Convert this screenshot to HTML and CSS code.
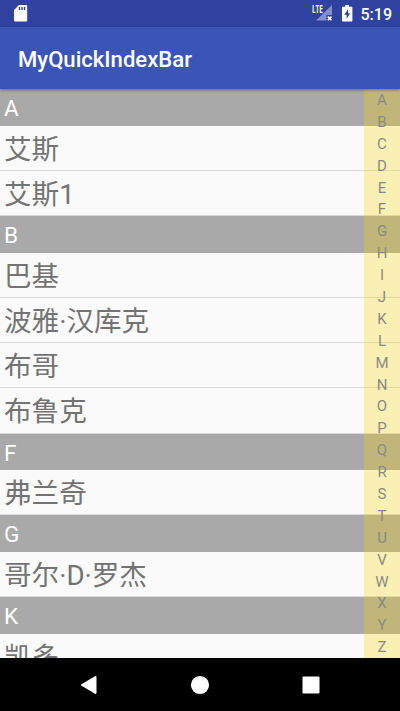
FILE: index.html
```html
<!DOCTYPE html>
<html lang="zh-CN">
<head>
<meta charset="utf-8">
<title>MyQuickIndexBar</title>
<link rel="stylesheet" href="styles.css">
</head>
<body>
<div class="screen">
  <header class="status">
    <svg class="sd" width="14" height="17" viewBox="0 0 14 17"><path fill="#fff" fill-rule="evenodd" d="M5 0H12Q13.2 0 13.2 1.3V15.2Q13.2 16.5 12 16.5H1.2Q0 16.5 0 15.2V5ZM4.8 2V5H6.2V2ZM7.3 2V5H8.7V2ZM9.8 2V5H11.2V2Z"/></svg>
    <div class="signal">
      <span class="lte">LTE</span>
      <svg width="17" height="17" viewBox="0 0 17 17"><path fill="#8190cb" d="M16 0V10H10.5V15.5H0Z"/><path stroke="#fff" stroke-width="1.5" d="M11.8 11.6 15.5 15.3M15.5 11.6 11.8 15.3"/></svg>
    </div>
    <svg class="battery" width="11" height="17" viewBox="0 0 11 17"><path fill="#fff" fill-rule="evenodd" d="M3.3 0H7.1V1.7H9.5Q10.4 1.7 10.4 2.6V15.6Q10.4 16.5 9.5 16.5H.9Q0 16.5 0 15.6V2.6Q0 1.7 .9 1.7H3.3ZM6 4.2 2.3 9.8H4.6V14L8.1 8.3H6Z"/></svg>
    <span class="clock">5:19</span>
  </header>
  <div class="appbar"><h1>MyQuickIndexBar</h1></div>
  <main class="content">
    <div class="list">
      <div class="letter">A</div>
      <div class="name">艾斯</div>
      <div class="name">艾斯1</div>
      <div class="letter">B</div>
      <div class="name">巴基</div>
      <div class="name">波雅·汉库克</div>
      <div class="name">布哥</div>
      <div class="name">布鲁克</div>
      <div class="letter">F</div>
      <div class="name">弗兰奇</div>
      <div class="letter">G</div>
      <div class="name">哥尔·D·罗杰</div>
      <div class="letter">K</div>
      <div class="name">凯多</div>
    </div>
    <nav class="index">
      <span>A</span><span>B</span><span>C</span><span>D</span><span>E</span><span>F</span><span>G</span><span>H</span><span>I</span><span>J</span><span>K</span><span>L</span><span>M</span><span>N</span><span>O</span><span>P</span><span>Q</span><span>R</span><span>S</span><span>T</span><span>U</span><span>V</span><span>W</span><span>X</span><span>Y</span><span>Z</span>
    </nav>
  </main>
  <footer class="navbar">
    <svg width="18" height="20" viewBox="0 0 18 20"><path fill="#fff" stroke="#fff" stroke-width="2" stroke-linejoin="round" d="M2 10 15.5 2V18Z"/></svg>
    <svg width="20" height="20" viewBox="0 0 20 20"><circle cx="10" cy="10" r="9.1" fill="#fff"/></svg>
    <svg width="18" height="18" viewBox="0 0 18 18"><rect x=".5" y=".5" width="17" height="17" rx="1" fill="#fff"/></svg>
  </footer>
</div>
</body>
</html>
```
FILE: styles.css
```css
* { box-sizing: border-box; }
body {
  margin: 0;
  font-family: Roboto, "Noto Sans CJK SC", sans-serif;
}
.screen {
  width: 400px;
  height: 711px;
  display: flex;
  flex-direction: column;
  overflow: hidden;
}
.status {
  height: 27px;
  flex: none;
  display: flex;
  align-items: center;
  padding: 0 8px 0 14px;
  background: #3042a0;
  color: #fff;
}
.signal {
  display: flex;
  align-items: flex-start;
  margin-left: auto;
  margin-right: 9px;
}
.lte {
  width: 4px;
  font: 700 10px/9px "Open Sans", sans-serif;
  transform: scaleX(.64);
  transform-origin: left;
}
.battery { margin-right: 8px; }
.clock {
  font-size: 16px;
  font-weight: 500;
  line-height: 27px;
  padding-top: 1px;
}
.appbar {
  height: 62px;
  flex: none;
  display: flex;
  align-items: center;
  padding: 1px 18px 0;
  background: #3b54b8;
  box-shadow: 0 1px 3px rgba(0, 0, 0, .4);
  position: relative;
  z-index: 1;
}
.appbar h1 {
  margin: 0;
  color: #fff;
  font-size: 22.1px;
  font-weight: 500;
}
.content {
  height: 569px;
  flex: none;
  display: grid;
  grid-template-columns: 364px 36px;
  grid-template-rows: 569px;
  background: #fafafa;
  overflow: hidden;
}
.list {
  grid-area: 1 / 1 / 2 / 3;
  overflow: hidden;
}
.letter {
  height: 36.7px;
  padding-left: 4px;
  background: #a9a9a9;
  color: #fff;
  font-size: 22.5px;
  line-height: 39px;
}
.name {
  height: 45.2px;
  padding-left: 4px;
  color: #737373;
  font-size: 27.6px;
  line-height: 48px;
  border-bottom: 1px solid #d9d9d9;
}
.index {
  grid-area: 1 / 2 / 2 / 3;
  display: flex;
  flex-direction: column;
  background: rgba(255, 215, 0, .28);
  color: #8c8885;
  font-size: 15px;
  text-align: center;
  z-index: 0;
}
.index span {
  flex: 1;
  line-height: 23.6px;
  min-height: 0;
}
.navbar {
  height: 53px;
  flex: none;
  display: flex;
  align-items: center;
  justify-content: space-between;
  padding: 0 80px;
  background: #000;
}
```
